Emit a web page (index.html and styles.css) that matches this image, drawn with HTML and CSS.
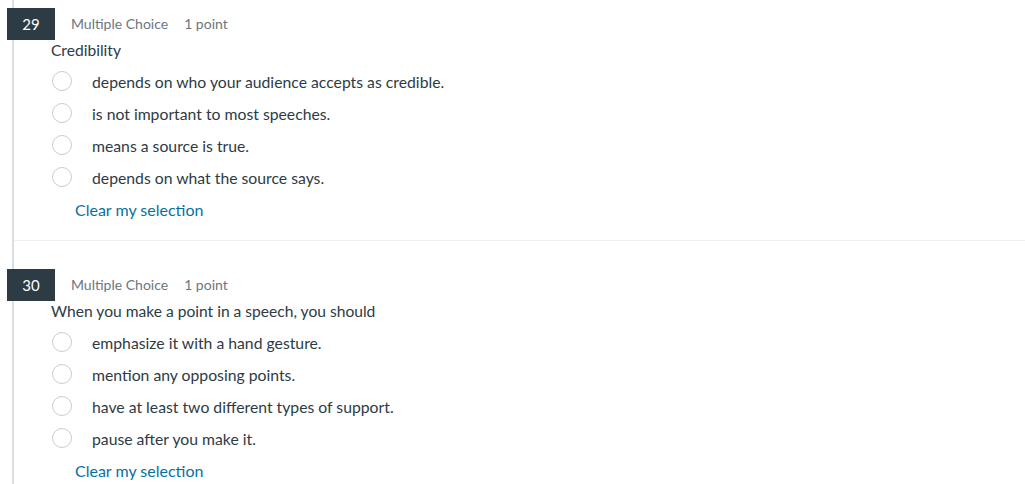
FILE: index.html
```html
<!DOCTYPE html>
<html>
<head>
<meta charset="utf-8">
<link rel="stylesheet" href="styles.css">
</head>
<body>
<div class="quiz">
  <section class="question">
    <div class="q-header">
      <div class="q-num">29</div>
      <span class="q-type">Multiple Choice</span>
      <span class="q-points">1 point</span>
    </div>
    <div class="q-text">Credibility</div>
    <ul class="answers">
      <li class="answer"><span class="radio"></span><span class="label">depends on who your audience accepts as credible.</span></li>
      <li class="answer"><span class="radio"></span><span class="label">is not important to most speeches.</span></li>
      <li class="answer"><span class="radio"></span><span class="label">means a source is true.</span></li>
      <li class="answer"><span class="radio"></span><span class="label">depends on what the source says.</span></li>
    </ul>
    <a class="clear" href="#">Clear my selection</a>
  </section>
  <div class="divider"></div>
  <section class="question">
    <div class="q-header">
      <div class="q-num">30</div>
      <span class="q-type">Multiple Choice</span>
      <span class="q-points">1 point</span>
    </div>
    <div class="q-text">When you make a point in a speech, you should</div>
    <ul class="answers">
      <li class="answer"><span class="radio"></span><span class="label">emphasize it with a hand gesture.</span></li>
      <li class="answer"><span class="radio"></span><span class="label">mention any opposing points.</span></li>
      <li class="answer"><span class="radio"></span><span class="label">have at least two different types of support.</span></li>
      <li class="answer"><span class="radio"></span><span class="label">pause after you make it.</span></li>
    </ul>
    <a class="clear" href="#">Clear my selection</a>
  </section>
</div>
</body>
</html>
```

FILE: styles.css
```css
html, body {
  margin: 0;
  padding: 0;
  background: #fff;
  height: 100%;
  overflow: hidden;
}
body {
  font-family: Lato, "Liberation Sans", sans-serif;
  color: #2d3b45;
}
.quiz {
  margin-left: 12px;
  border-left: 2px solid #dcdfe1;
  min-height: 100%;
  padding-top: 8px;
  box-sizing: border-box;
}
.question {
  padding-bottom: 14px;
}
.q-header {
  display: flex;
  align-items: center;
  height: 32px;
}
.q-num {
  width: 48px;
  height: 32px;
  margin-left: -7px;
  background: #2d3b45;
  color: #fff;
  font-size: 15px;
  display: flex;
  align-items: center;
  justify-content: center;
}
.q-type,
.q-points {
  margin-left: 16px;
  margin-bottom: 2px;
  font-size: 14px;
  color: #6b7780;
}
.q-text {
  margin-left: 37px;
  font-size: 15.6px;
  line-height: 20px;
}
.answers {
  list-style: none;
  margin: 5px 0 0 0;
  padding: 0;
}
.answer {
  display: flex;
  align-items: center;
  height: 32px;
  margin-left: 38px;
}
.radio {
  width: 18px;
  height: 18px;
  border: 1px solid #c7cdd1;
  border-radius: 50%;
  flex: none;
}
.label {
  margin-left: 20px;
  font-size: 15.75px;
}
.clear {
  display: block;
  margin-top: 1px;
  margin-left: 61px;
  line-height: 32px;
  font-size: 16px;
  color: #0770a3;
  text-decoration: none;
}
.divider {
  height: 1px;
  background: #f0f0f0;
  margin-bottom: 28px;
}
```
